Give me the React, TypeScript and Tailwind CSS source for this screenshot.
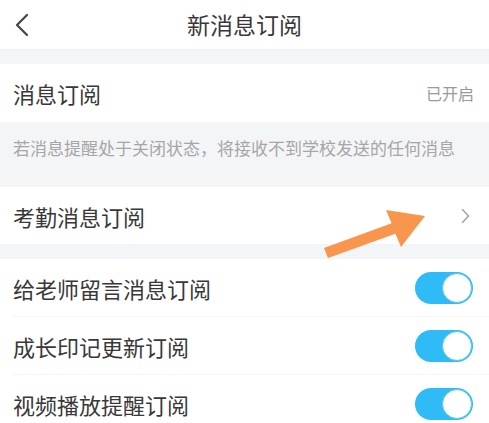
import React from "react";

const font = { fontFamily: '"Noto Sans CJK SC", "Noto Sans", sans-serif' };

function Toggle() {
  return (
    <div className="relative h-[32px] w-[58px] rounded-full bg-[#2fbbf5]">
      <div className="absolute right-[1px] top-[1px] h-[30px] w-[30px] rounded-full border border-[#5cc6ee] bg-white" />
    </div>
  );
}

export default function App() {
  const toggles = ["给老师留言消息订阅", "成长印记更新订阅", "视频播放提醒订阅"];
  return (
    <div className="relative h-[423px] w-[489px] overflow-hidden bg-[#f4f5f7] text-[#383838]" style={font}>
      <div className="relative flex h-[50px] items-center justify-center border-b border-[#efefef] bg-white">
        <svg className="absolute left-[14px] top-[13px]" width="16" height="24" viewBox="0 0 16 24">
          <path d="M13 2 L3 12 L13 22" fill="none" stroke="#444" strokeWidth="2.2" strokeLinecap="round" strokeLinejoin="round" />
        </svg>
        <span className="text-[23px] leading-none text-[#383838]">新消息订阅</span>
      </div>
      <div className="h-[14px]" />
      <div className="flex h-[58px] items-center justify-between bg-white px-[13px]">
        <span className="text-[22px] leading-none">消息订阅</span>
        <span className="pr-[2px] text-[16px] leading-none text-[#9a9a9a]">已开启</span>
      </div>
      <div className="h-[65px] px-[13px] pt-[14px] text-[17px] leading-[24px] text-[#a6a6a6]">
        若消息提醒处于关闭状态，将接收不到学校发送的任何消息
      </div>
      <div className="flex h-[57px] items-center justify-between bg-white px-[13px]">
        <span className="text-[22px] leading-none">考勤消息订阅</span>
        <svg width="9" height="16" viewBox="0 0 9 16" className="mr-[6px]">
          <path d="M1.5 1.5 L7.5 8 L1.5 14.5" fill="none" stroke="#a0a0a0" strokeWidth="1.4" strokeLinecap="round" strokeLinejoin="round" />
        </svg>
      </div>
      <div className="h-[15px]" />
      <div className="bg-white pl-[13px]">
        {toggles.map((t, i) => (
          <div
            key={t}
            className={`flex h-[58px] items-center justify-between pr-[16px] ${i < toggles.length - 1 ? "border-b border-[#f5f5f5]" : ""}`}
          >
            <span className="text-[22px] leading-none">{t}</span>
            <Toggle />
          </div>
        ))}
      </div>
      <svg className="pointer-events-none absolute left-0 top-0" width="489" height="423" viewBox="0 0 489 423">
        <polygon
          points="324,248 391.6,223.3 386,210 425,216 401,247 395.4,233.7 328,258"
          fill="#f7964c"
        />
      </svg>
    </div>
  );
}
